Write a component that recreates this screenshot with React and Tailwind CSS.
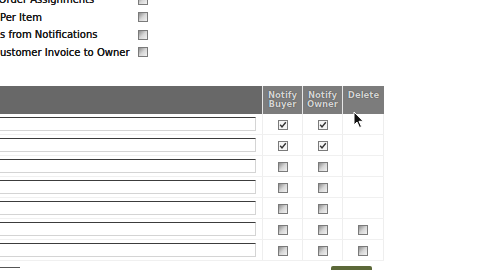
import React from 'react';

const labelFont = { fontFamily: '"DejaVu Sans", Verdana, sans-serif' };

function Box({ checked }) {
  if (checked) {
    return (
      <div className="w-[10px] h-[10px] border border-[#7a7a7a] bg-[#f4f4f4] flex items-center justify-center">
        <svg width="8" height="8" viewBox="0 0 8 8">
          <path d="M1.2 3.8 L3 6 L6.8 1.2" fill="none" stroke="#333" strokeWidth="1.4" />
        </svg>
      </div>
    );
  }
  return (
    <div className="w-[10px] h-[10px] border border-[#7a7a7a] bg-gradient-to-br from-[#8e8e8e] via-[#d6d6d6] to-[#f2f2f2]" />
  );
}

const options = [
  { label: 'Notify Owner Order Assignments', shift: 'ml-[-70px]' },
  { label: 'Per Item', shift: '' },
  { label: 's from Notifications', shift: '' },
  { label: 'ustomer Invoice to Owner', shift: '' },
];

const rows = [
  { buyer: true, owner: true, del: null },
  { buyer: true, owner: true, del: null },
  { buyer: false, owner: false, del: null },
  { buyer: false, owner: false, del: null },
  { buyer: false, owner: false, del: null },
  { buyer: false, owner: false, del: false },
  { buyer: false, owner: false, del: false },
];

const headCell =
  'border-l border-[#e6e6e6] bg-[#7c7c7c] flex flex-col items-center pt-[5px] text-[8.5px] leading-[9px] font-bold text-[#d4d4d4] [text-shadow:0_0_1px_#2a2a2a]';

export default function App() {
  return (
    <div className="relative w-[480px] h-[270px] overflow-hidden bg-white" style={labelFont}>
      <div className="mt-[-9px] flex flex-col">
        {options.map((o, i) => (
          <div key={i} className="h-[17.5px] flex items-center">
            <div className="w-[138px] overflow-hidden whitespace-nowrap">
              <div className={`text-[10px] text-[#1a1a1a] [text-shadow:0_0_0.6px_#000] ${o.shift}`}>{o.label}</div>
            </div>
            <Box checked={false} />
          </div>
        ))}
      </div>

      <div className="mt-[25px] w-[384px] flex flex-col">
        <div className="h-[28px] flex">
          <div className="w-[262px] bg-[#686868]" />
          <div className={`w-[40px] ${headCell}`}>
            <span>Notify</span>
            <span>Buyer</span>
          </div>
          <div className={`w-[40px] ${headCell}`}>
            <span>Notify</span>
            <span>Owner</span>
          </div>
          <div className={`w-[42px] ${headCell}`}>
            <span>Delete</span>
          </div>
        </div>

        {rows.map((r, i) => (
          <div key={i} className="h-[21px] flex border-b border-[#f0f0f0]">
            <div className="w-[262px] pt-[3px] pr-[6px]">
              <div className="ml-[-2px] h-[14px] bg-white border border-[#d4d4d4] border-t-[#3c3c3c]" />
            </div>
            <div className="w-[40px] border-l border-[#eeeeee] flex justify-center pt-[6px]">
              <Box checked={r.buyer} />
            </div>
            <div className="w-[40px] border-l border-[#eeeeee] flex justify-center pt-[6px]">
              <Box checked={r.owner} />
            </div>
            <div className="w-[42px] border-l border-r border-[#eeeeee] flex justify-center pt-[6px]">
              {r.del !== null && <Box checked={r.del} />}
            </div>
          </div>
        ))}

        <div className="h-[10px] flex items-end">
          <div className="w-[20px] h-[3px] border-t border-[#555] mb-[1px]" />
          <div className="ml-[311px] w-[41px] h-[5px] bg-[#5c6838] rounded-t-[2px]" />
        </div>
      </div>

      <svg className="absolute left-[353px] top-[111px]" width="12" height="18" viewBox="0 0 12 18">
        <path d="M1 1 L1 14 L4 11 L6.5 16.5 L8.5 15.6 L6 10.3 L10.2 10.3 Z" fill="#111" stroke="#fff" strokeWidth="1" />
      </svg>
    </div>
  );
}
